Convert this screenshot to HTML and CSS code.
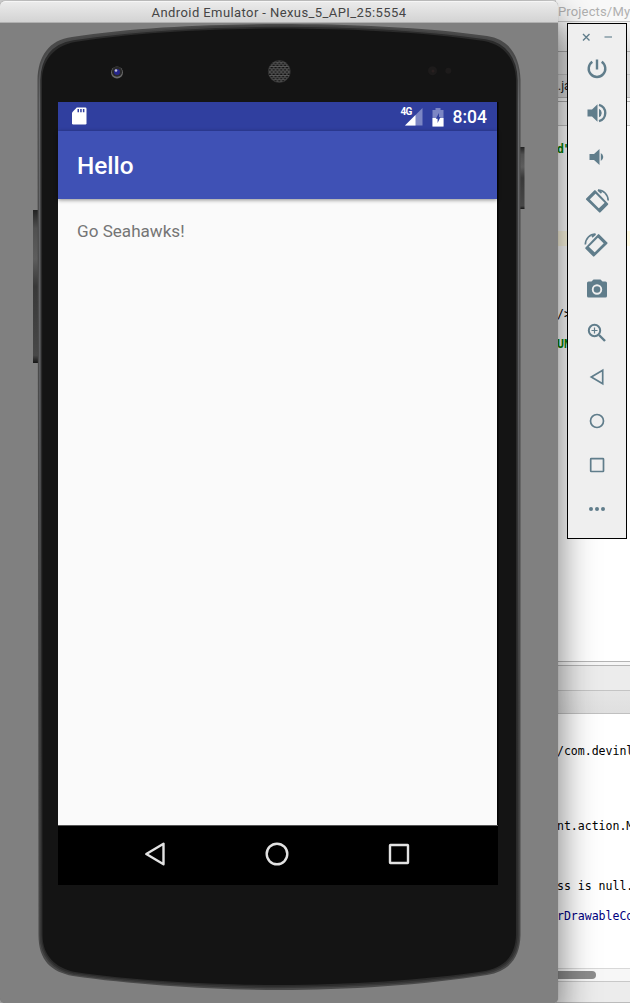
FILE: index.html
```html
<!DOCTYPE html>
<html lang="en">
<head>
<meta charset="utf-8">
<title>Android Emulator</title>
<link rel="stylesheet" href="styles.css">
</head>
<body>
<div class="desktop">
  <section class="ide">
    <div class="ide-title">Projects/My</div>
    <div class="ide-toolbar"></div>
    <div class="ide-nav"></div>
    <div class="ide-tabs">.ja</div>
    <div class="ide-gap"></div>
    <div class="ide-crumbs"></div>
    <div class="editor">
      <div class="code code-first">d"</div>
      <div class="active-line"></div>
      <div class="code code-close">/&gt;</div>
      <div class="code code-const">UN</div>
    </div>
    <div class="splitter"></div>
    <div class="panel-title"></div>
    <div class="panel-tools"></div>
    <div class="console">
      <div class="log log-a">/com.devinl</div>
      <div class="log log-b">nt.action.M</div>
      <div class="log log-c">ss is null.</div>
      <div class="log log-d">rDrawableCo</div>
    </div>
    <div class="scroll"><div class="thumb"></div></div>
    <div class="ide-status"></div>
  </section>

  <section class="emulator">
    <header class="titlebar"><span>Android Emulator - Nexus_5_API_25:5554</span></header>
    <div class="stage">
      <svg class="shell" width="558" height="980" viewBox="0 23 558 980">
        <defs>
          <linearGradient id="key" x1="0" y1="0" x2="0" y2="1"><stop offset="0" stop-color="#222"/><stop offset=".12" stop-color="#505050"/><stop offset=".32" stop-color="#5d5d5d"/><stop offset=".5" stop-color="#383838"/><stop offset=".95" stop-color="#484848"/><stop offset="1" stop-color="#151515"/></linearGradient>
          <linearGradient id="rim" x1="0" y1="0" x2="0" y2="1"><stop offset="0" stop-color="#404040"/><stop offset=".08" stop-color="#68696b"/><stop offset=".4" stop-color="#5c5d60"/><stop offset=".7" stop-color="#3e3e3e"/><stop offset="1" stop-color="#383838"/></linearGradient>
          <pattern id="mesh" x="268" y="60" width="3.800" height="4.400" patternUnits="userSpaceOnUse"><rect width="3.800" height="4.400" fill="#6a6a6a"/><rect x=".4" y=".3" width="2.900" height="1.500" fill="#121212"/><rect x="-1.500" y="2.500" width="2.900" height="1.500" fill="#121212"/><rect x="2.300" y="2.500" width="2.900" height="1.500" fill="#121212"/></pattern>
        </defs>
        <rect x="33" y="210" width="6" height="153" fill="url(#key)"/>
        <rect x="519" y="147" width="5.500" height="62" fill="url(#key)"/>
        <path d="M37.500 80C38 56 49 40 72 37C135 27 215 24 279 24C345 24 425 27 487 36C509 39 520 56 520.500 80V935C520 957 510 971 487 975C425 985 345 990 279 990C215 990 135 985 73 976C51 972 38.500 960 38.500 935Z" fill="#4a4a4a"/>
        <path d="M39.500 80C40 58 51 43 73 39.500C135 30 215 26 279 26C345 26 425 30 486 38.500C507 42 518 58 518.500 80V935C518 956 508 969 486 973C425 983 345 987.500 279 987.500C215 987.500 135 983 73 974C53 970 40.500 957 40.500 935Z" fill="#2b2b2b" stroke="url(#rim)" stroke-width="1.600"/>
        <path d="M42 80C42.500 60 54 46 75 42C135 32 215 28.500 279 28.500C345 28.500 425 32 484 41C505 45 515.500 60 516 80V935C515.500 954 506 967 485 971C425 980 345 985 279 985C215 985 135 981 75 972C55 968 42.500 955 42.500 935Z" fill="#141414"/>
        <circle cx="117" cy="72.500" r="6" fill="#6a6a6a"/><circle cx="117" cy="71.700" r="5.100" fill="#292929"/><circle cx="117" cy="72" r="3" fill="#26268c"/><circle cx="116" cy="70.500" r="1.300" fill="#c0c0d8"/>
        <circle cx="279.300" cy="71.500" r="11" fill="url(#mesh)" stroke="#363636" stroke-width=".6"/>
        <circle cx="432.500" cy="70.700" r="4.500" fill="#1d1b1b"/><circle cx="433" cy="71" r="1.500" fill="#292020"/><circle cx="448.300" cy="70.700" r="3" fill="#1d1b1b"/>
        <rect x="497" y="102" width="1.500" height="724" fill="#050505"/>
      </svg>
      <div class="screen">
        <div class="statusbar">
          <svg class="sd" width="15" height="18" viewBox="0 0 15 18"><path d="M4.800 .5H13.300Q14.500 .5 14.500 1.700V16.300Q14.500 17.500 13.300 17.500H1.200Q0 17.500 0 16.300V5.500Z" fill="#fff"/><path d="M5.500 2h1.500v3.200H5.500zM8.200 2h1.500v3.200H8.200zM10.900 2h1.500v3.200h-1.500z" fill="#303f9f"/></svg>
          <span class="net">4G</span>
          <svg class="signal" width="18" height="18" viewBox="0 0 18 18"><path d="M0 17.500L17.500 0V17.500Z" fill="#7c86c4"/><path d="M0 17.500L10.500 7V17.500Z" fill="#fff"/></svg>
          <svg class="battery" width="12" height="19" viewBox="0 0 12 19"><path d="M3.500 0H8.500V2H11.500V18.500H.5V2H3.500Z" fill="#7c86c4"/><path d="M.5 10H11.500V18.500H.5Z" fill="#fff"/><path d="M7 5L3.800 10.800H5.600V15L8.500 9H7Z" fill="#303f9f"/></svg>
          <span class="clock">8:04</span>
        </div>
        <div class="appbar">Hello</div>
        <main class="content">Go Seahawks!</main>
        <nav class="navbar">
          <svg width="24" height="26" viewBox="0 0 24 26"><path d="M3.300 13L20.500 2.700V23.300Z"/></svg>
          <svg width="24" height="26" viewBox="0 0 24 26"><circle cx="12" cy="13" r="10.300"/></svg>
          <svg width="24" height="26" viewBox="0 0 24 26"><rect x="3" y="4" width="18" height="18" rx=".4"/></svg>
        </nav>
      </div>
    </div>
  </section>

  <aside class="tools">
    <div class="tools-head">
      <svg width="9" height="9" viewBox="0 0 9 9"><path d="M1 1L7.500 7.500M7.500 1L1 7.500" stroke="#607d8b" stroke-width="1.400"/></svg>
      <svg width="9" height="9" viewBox="0 0 9 9"><path d="M.5 4H8" stroke="#90a4ae" stroke-width="1.700"/></svg>
    </div>
    <svg viewBox="0 0 24 24"><path d="M12 2.500V12.500M7.300 4.800A8.300 8.300 0 1 0 16.700 4.800" class="line bold"/></svg>
    <svg viewBox="0 0 24 24"><path d="M2.500 8.500H7L12.500 3.300V20.700L7 15.500H2.500Z"/><path d="M14 7.800A4.600 4.600 0 0 1 14 16.200Z"/><path d="M14 3.800A8.500 8.500 0 0 1 14 20.200" class="line bold"/></svg>
    <svg viewBox="0 0 24 24"><path d="M4.500 9H9L14.500 4V20L9 15H4.500Z"/><path d="M15.800 8A4.500 4.500 0 0 1 15.800 16Z"/></svg>
    <svg viewBox="0 0 24 24"><g id="turn"><path fill-rule="evenodd" d="M9.200 1.400L1.200 9.400Q.6 10 1.200 10.700L14.100 23.300Q14.800 24 15.500 23.300L23 15.800Q23.600 15.100 23 14.500L10.600 1.400Q9.900 .7 9.200 1.400ZM9.400 3.600L20.600 14.700L14.200 20.900L3.200 10Z"/><path d="M2 10L4.500 7.500L16.500 19.500L14.500 22.500ZM9.500 2.500L12 5L9 5Z" opacity="0"/><path d="M2 10.300L3.500 9L16 21.500L14.800 22.700ZM20.200 13.200L22.300 15.200L14.800 22.800L12.600 20.600ZM1.700 10L9.800 2L11.500 3.700L3.400 11.800Z"/><path d="M13 1C18.500 1 23 5.500 23.200 11.500M13 1L16.500 4" class="line"/></g></svg>
    <svg viewBox="0 0 24 24"><use href="#turn" transform="translate(23.500 0) scale(-1 1)"/></svg>
    <svg viewBox="0 0 24 24"><path fill-rule="evenodd" d="M8.500 2.500H15.500L17.500 4.500H20.500Q22 4.500 22 6V19Q22 20.500 20.500 20.500H3.500Q2 20.500 2 19V6Q2 4.500 3.500 4.500H6.500ZM12 7.300A5.200 5.200 0 1 0 12 17.700A5.200 5.200 0 1 0 12 7.300Z"/><circle cx="12" cy="12.500" r="3.300"/></svg>
    <svg viewBox="0 0 24 24"><circle cx="9.500" cy="9.500" r="5.700" class="line med"/><path d="M14 14L20 20" class="line bold"/><path d="M9.500 6.500V12.500M6.500 9.500H12.500" class="line thin"/></svg>
    <svg viewBox="0 0 24 24"><path d="M6.300 12L17.700 5.300V18.700Z" class="line"/></svg>
    <svg viewBox="0 0 24 24"><circle cx="12" cy="12" r="6.500" class="line"/></svg>
    <svg viewBox="0 0 24 24"><rect x="5.700" y="5.700" width="12.800" height="12.800" rx=".6" class="line"/></svg>
    <svg viewBox="0 0 24 24"><circle cx="6" cy="12" r="2"/><circle cx="12" cy="12" r="2"/><circle cx="18" cy="12" r="2"/></svg>
  </aside>
</div>
</body>
</html>
```
FILE: styles.css
```css
* { box-sizing: border-box; }
body { margin: 0; }
svg { display: block; flex: none; }

.desktop { position: relative; width: 630px; height: 1003px; overflow: hidden; background: #d2d2d2; }

/* IDE window, partly hidden behind the emulator */
.ide { position: absolute; left: 556px; top: 0; width: 74px; height: 1003px; display: flex; flex-direction: column; overflow: hidden; background: #fff; white-space: nowrap; }
.ide-title { height: 22px; padding-left: 2px; border-bottom: 1px solid #c5c5c5; background: #f8f8f8; color: #b0b0b0; font: 13px/23px Roboto, sans-serif; letter-spacing: .15px; }
.ide-toolbar { height: 30px; background: linear-gradient(#f5f5f5, #dedede); border-bottom: 1px solid #a5a5a5; }
.ide-nav { height: 23px; background: #dadada; border-bottom: 1px solid #bdbdbd; }
.ide-tabs { height: 23px; padding-left: 2px; background: #d6d6d6; border-bottom: 1px solid #b2b2b2; color: #222; font: 12px/23px Roboto, sans-serif; }
.ide-gap { height: 4px; background: #f2f2f2; border-bottom: 1px solid #aaa; }
.ide-crumbs { height: 24px; background: #f0f0f0; border-bottom: 1px solid #c2c2c2; }
.editor { height: 535px; padding-top: 15px; }
.code, .log { font: 11.57px/16px "DejaVu Sans Mono", monospace; height: 16px; padding-left: 1px; }
.code-first { color: #008000; font-weight: bold; }
.active-line { height: 15px; margin-top: 74px; background: #fffae3; }
.code-close { margin-top: 60px; color: #000; }
.code-const { margin-top: 14px; color: #008000; font-weight: bold; }
.splitter { height: 5px; border-top: 1px solid #b4b4b4; border-bottom: 1px solid #b4b4b4; background: #f6f6f6; }
.panel-title { height: 25px; background: #ececec; border-bottom: 1px solid #c4c4c4; }
.panel-tools { height: 23px; background: linear-gradient(#e5e5e5, #dfdfdf); border-bottom: 1px solid #c0c0c0; }
.console { height: 254px; padding-top: 29px; }
.log { letter-spacing: -.03px; }
.log-b { margin-top: 59px; }
.log-c { margin-top: 44px; }
.log-d { margin-top: 14px; color: #000080; }
.scroll { height: 14px; padding-top: 2px; border-top: 1px solid #d8d8d8; border-bottom: 1px solid #c8c8c8; background: #f7f7f7; }
.thumb { width: 40px; height: 8px; border-radius: 0 4px 4px 0; background: #8c8c8c; }
.ide-status { flex: 1; background: #ececec; border-bottom: 1px solid #bbb; }

/* Emulator window */
.emulator { position: absolute; left: 0; top: 1px; width: 558px; height: 1002px; border-radius: 5px; background: #808080; box-shadow: 0 18px 36px 2px rgba(0, 0, 0, .5), 0 0 1px rgba(0, 0, 0, .3); }
.titlebar { height: 22px; border-radius: 5px 5px 0 0; border-top: 1px solid #f6f6f6; border-bottom: 1px solid #b1b1b1; background: linear-gradient(#ebebeb, #d3d3d3); text-align: center; color: #454545; font: 13px/21px Roboto, sans-serif; letter-spacing: .41px; }
.stage { display: grid; height: 980px; }
.shell { grid-area: 1 / 1; }
.screen { grid-area: 1 / 1; z-index: 1; margin: 79px 60px 0 58px; display: flex; flex-direction: column; height: 783px; font-family: Roboto, sans-serif; }
.statusbar { width: 439px; height: 29px; padding: 5px 10px 0 14px; display: flex; align-items: flex-start; background: #303f9f; color: #fff; }
.net { margin-left: auto; font: bold 10px/10px Roboto, sans-serif; letter-spacing: -.8px; }
.signal { margin: 1px 0 0 -7px; }
.battery { margin: 1px 9px 0 9px; }
.clock { font-size: 17.5px; font-weight: 500; line-height: 21px; }
.appbar { position: relative; width: 439px; height: 68px; padding-left: 19px; background: #3f51b5; color: #fff; font-size: 24.4px; font-weight: 500; line-height: 70px; box-shadow: 0 1px 4px rgba(0, 0, 0, .45); }
.content { width: 439px; height: 626px; padding: 22px 19px; background: #fafafa; color: #757575; font-size: 17.1px; line-height: 20px; }
.navbar { width: 440px; height: 60px; padding: 0 87px 3px 85px; border-top: 1px solid #555; background: #000; display: flex; justify-content: space-between; align-items: center; fill: none; stroke: #e2e2e2; stroke-width: 2.400; stroke-linejoin: round; }

/* Floating control strip */
.tools { position: absolute; left: 567px; top: 23px; width: 60px; height: 516px; border: 1px solid #000; background: #efefef; display: flex; flex-direction: column; align-items: center; gap: 20px; fill: #607d8b; }
.tools-head { display: flex; gap: 13px; height: 12px; padding: 8.500px 0 0 1px; margin-bottom: 1px; }
.tools > svg { width: 24px; height: 24px; overflow: visible; }
.line { fill: none; stroke: #607d8b; stroke-width: 1.700; }
.bold { stroke-width: 2.400; }
.med { stroke-width: 2; }
.thin { stroke-width: 1.200; }
```
